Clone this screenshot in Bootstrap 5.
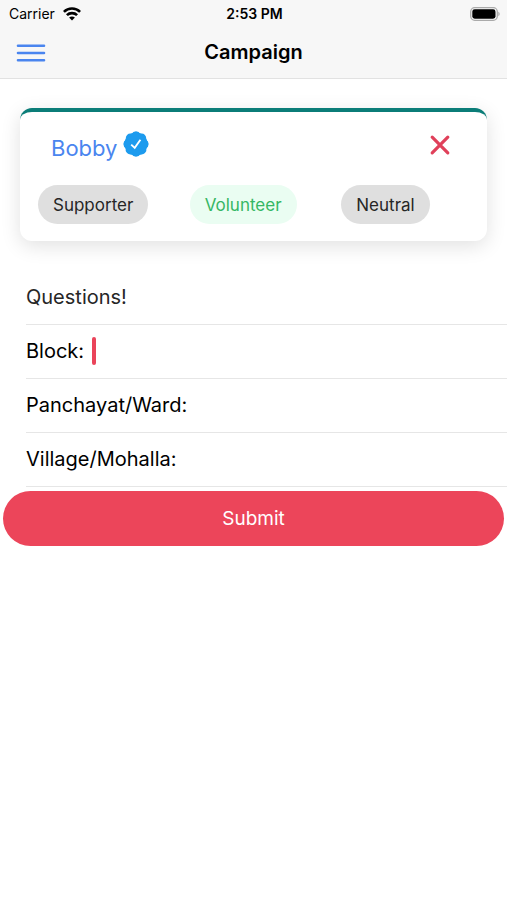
<!DOCTYPE html>
<html lang="en">
<head>
<meta charset="utf-8">
<meta name="viewport" content="width=device-width, initial-scale=1">
<title>Campaign</title>
<link href="https://cdn.jsdelivr.net/npm/bootstrap@5.3.0/dist/css/bootstrap.min.css" rel="stylesheet">
<style>
body { font-family: Inter, "Liberation Sans", sans-serif; color: #000; background: #fff; }
svg { display: block; }
.app-header { background: #f7f7f7; border-bottom: 1px solid #e2e2e2; }
.status-bar { height: 27px; padding: 0 7px 0 9px; font-size: 14px; line-height: 27px; }
.status-time { font-weight: 600; }
.title-bar { height: 51px; padding: 0 16px; }
.title-bar h1 { font-size: 20px; line-height: 51px; font-weight: 600; }
.menu-btn { display: block; }
.person-card { margin: 29px 20px 30px; border: 0; border-top: 4px solid #0b7d78; border-radius: 12px; box-shadow: 0 5px 20px rgba(0, 0, 0, .12); }
.person-head { padding: 14px 36px 0 31px; height: 73px; }
.person-name { color: #4a85ef; font-size: 22px; line-height: 44px; }
.chips { padding: 0 0 17px 12px; }
.chip { margin-left: 6px; height: 39px; padding: 2px 15px 0; border: 0; border-radius: 20px; font-size: 17px; line-height: 37px; background: #dfdfdf; color: #262626; }
.chip-on { background: #eafdf2; color: #36b764; }
.line-item { margin-left: 26px; height: 54px; padding-bottom: 2px; border-bottom: 1px solid #e6e6e6; font-size: 20px; }
.line-item h2 { font-size: 20px; color: #262626; }
.line-item input { min-width: 0; height: 44px; outline: 0; caret-color: #ea445a; }
.cursor-bar { width: 4px; height: 28px; margin-left: 8px; border-radius: 2px; background: #ea445a; }
.submit-btn { margin: 4px 3px; height: 55px; padding-top: 8px; border-radius: 28px; background: #ec455a; color: #fff; font-size: 19px; }
.submit-btn:hover { background: #d93e52; color: #fff; }
</style>
</head>
<body>
<header class="app-header">
  <div class="status-bar row g-0 align-items-center">
    <div class="col d-flex align-items-center gap-2">
      <span>Carrier</span>
      <svg width="18" height="14" viewBox="0 0 18 14" fill="none" stroke="#000" stroke-width="2.6" aria-hidden="true">
        <path d="M.9 4.9C5.4.4 12.6.4 17.1 4.9"/>
        <path d="M3.9 8.2c2.8-2.8 7.4-2.8 10.2 0"/>
        <path d="M6.1 10.6C7.7 9 10.3 9 11.9 10.6L9 13.6z" fill="#000" stroke="none"/>
      </svg>
    </div>
    <div class="col-auto status-time">2:53 PM</div>
    <div class="col d-flex justify-content-end">
      <svg width="30" height="14" viewBox="0 0 30 14" aria-hidden="true">
        <rect x=".7" y=".7" width="26.6" height="12.6" rx="4" fill="#f7f7f7" stroke="#aaa" stroke-width="1.3"/>
        <rect x="2.3" y="2.3" width="23.2" height="9.4" rx="2.4" fill="#000"/>
        <path d="M28.3 4.8c1.8.7 1.8 3.7 0 4.4z" fill="#aaa"/>
      </svg>
    </div>
  </div>
  <div class="title-bar row g-0 align-items-center">
    <div class="col">
      <button type="button" class="btn menu-btn p-0 border-0" aria-label="Menu">
        <svg width="30" height="20" viewBox="0 0 30 20" stroke="#4a85ef" stroke-width="2.6" stroke-linecap="round"><path d="M2 2.8h26M2 10h26M2 17.2h26"/></svg>
      </button>
    </div>
    <h1 class="col-auto m-0">Campaign</h1>
    <div class="col"></div>
  </div>
</header>
<main>
  <section class="card person-card">
    <div class="person-head d-flex align-items-start justify-content-between">
      <div class="d-flex gap-1">
        <a href="#" class="person-name text-decoration-none">Bobby</a>
        <svg class="mt-1" width="30" height="28" viewBox="0 0 24 24" role="img" aria-label="Verified">
          <circle cx="12" cy="12" r="9.9" fill="#1d9bee"/>
          <path fill="#1d9bee" stroke="#1d9bee" stroke-width="1.2" stroke-linejoin="round" d="M22.25 12c0-1.43-.88-2.67-2.19-3.34.46-1.39.2-2.9-.81-3.91s-2.52-1.27-3.91-.81c-.66-1.31-1.91-2.19-3.34-2.19s-2.67.88-3.33 2.19c-1.4-.46-2.91-.2-3.92.81s-1.26 2.52-.8 3.91c-1.31.67-2.2 1.91-2.2 3.34s.89 2.67 2.2 3.34c-.46 1.39-.21 2.9.8 3.91s2.52 1.26 3.91.81c.67 1.31 1.91 2.19 3.34 2.19s2.68-.88 3.34-2.19c1.39.45 2.9.2 3.91-.81s1.27-2.52.81-3.91c1.31-.67 2.19-1.91 2.19-3.34z"/>
          <path d="M7.9 12.5l3 2.8 4.9-6.9" fill="none" stroke="#fff" stroke-width="1.6"/>
        </svg>
      </div>
      <button type="button" class="btn p-0 border-0 mt-2" aria-label="Close">
        <svg width="22" height="22" viewBox="0 0 22 22" stroke="#e0405a" stroke-width="3.2" stroke-linecap="round"><path d="M3.2 3.2l15.6 15.6M18.8 3.2L3.2 18.8"/></svg>
      </button>
    </div>
    <div class="chips row g-0">
      <div class="col-4"><button type="button" class="chip">Supporter</button></div>
      <div class="col-4"><button type="button" class="chip chip-on" aria-pressed="true">Volunteer</button></div>
      <div class="col-4"><button type="button" class="chip">Neutral</button></div>
    </div>
  </section>
  <form>
    <div class="line-item d-flex align-items-center"><h2 class="m-0 fw-normal">Questions!</h2></div>
    <div class="line-item d-flex align-items-center">
      <label for="block">Block:</label><span class="cursor-bar"></span>
      <input id="block" type="text" class="flex-fill border-0 bg-transparent">
    </div>
    <div class="line-item d-flex align-items-center">
      <label for="ward">Panchayat/Ward:</label>
      <input id="ward" type="text" class="flex-fill border-0 bg-transparent">
    </div>
    <div class="line-item d-flex align-items-center">
      <label for="village">Village/Mohalla:</label>
      <input id="village" type="text" class="flex-fill border-0 bg-transparent">
    </div>
    <div class="d-grid"><button type="submit" class="btn submit-btn border-0">Submit</button></div>
  </form>
</main>
<script src="https://cdn.jsdelivr.net/npm/bootstrap@5.3.0/dist/js/bootstrap.bundle.min.js"></script>
</body>
</html>
